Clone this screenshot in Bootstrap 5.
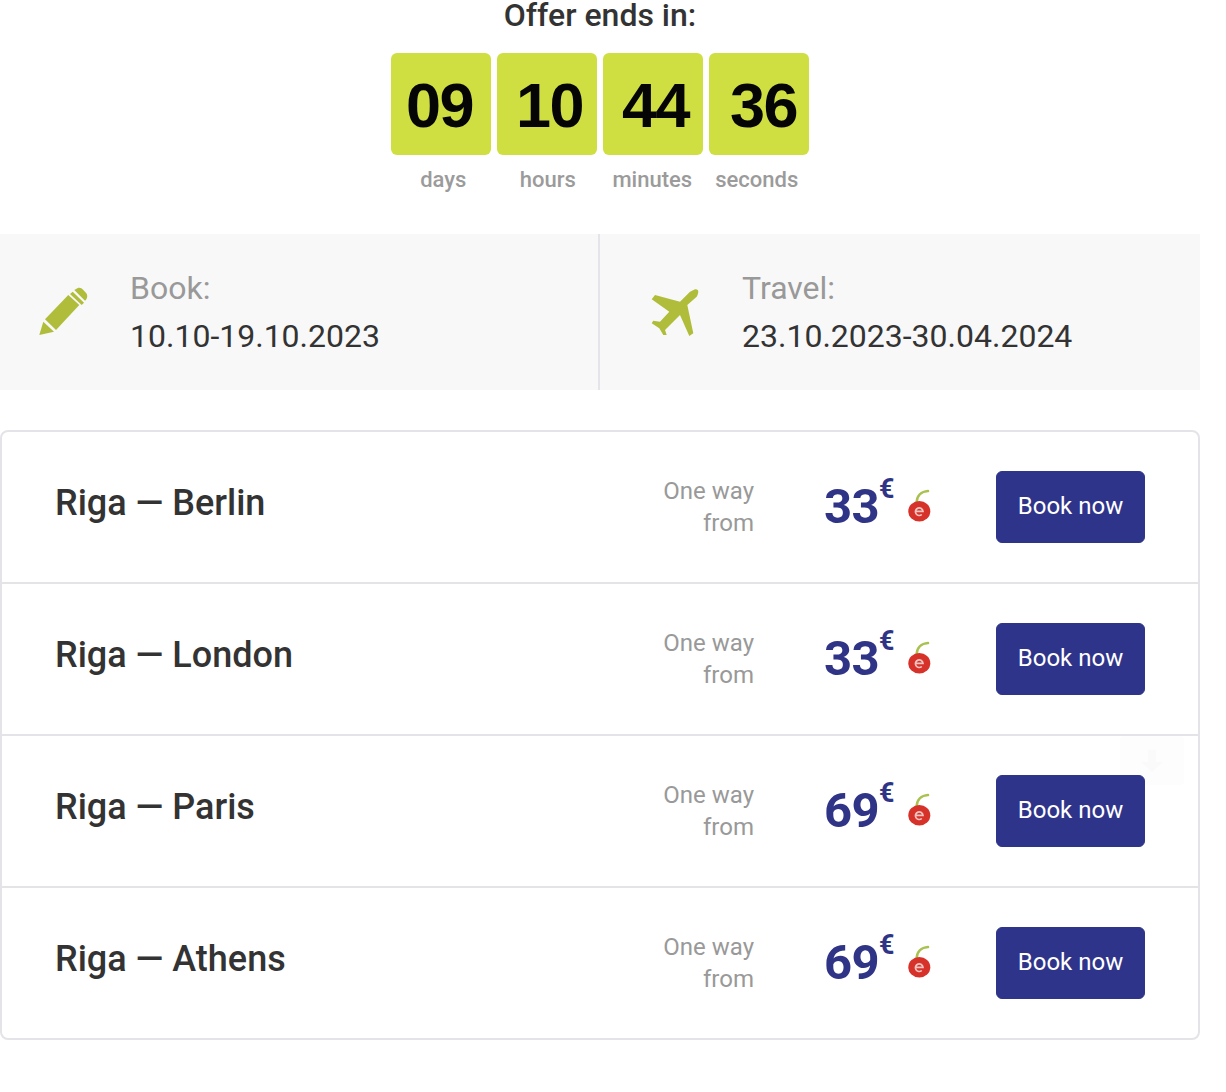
<!DOCTYPE html>
<html lang="en">
<head>
<meta charset="utf-8">
<title>Offer</title>
<link rel="stylesheet" href="https://cdn.jsdelivr.net/npm/bootstrap@5.3.0/dist/css/bootstrap.min.css">
<style>
html,body{margin:0;background:#fff}
body{font-family:Roboto,"Liberation Sans",sans-serif;color:#333;height:1092px;overflow:hidden}
.pg{width:1200px;position:relative}
.ttl{font-size:32px;font-weight:500;line-height:30px;height:53px;margin:0;color:#333}
.cnts{gap:6px}
.cnt{width:100px;height:102px;background:#cfdf42;border-radius:6px;font-family:"Liberation Sans",sans-serif;font-weight:700;font-size:63px;letter-spacing:-1.500px;color:#050505;line-height:105px;text-align:center}
.c1{padding-right:3px}
.c2{padding-left:5px}
.c3{padding-left:5px}
.c4{padding-left:9px}
.lbls{margin-top:12px;height:26px}
.lbl{width:104.500px;text-align:center;font-size:22px;font-weight:500;color:#9b9b9b;line-height:25px}
.info{margin-top:41px;height:156px;background:#f8f8f8}
.cell{height:156px}
.cell1{width:598px}
.cell2{width:602px;border-left:2px solid #e4e4ea}
.ic1{width:130px;padding-left:39px}
.ic2{width:142px;padding-left:50px}
.k{font-size:32px;line-height:48px;color:#999}
.v{font-size:32px;line-height:48px;color:#333}
.rows{margin-top:40px;border:2px solid #e4e4e8;border-radius:8px;position:relative;z-index:1}
.rw{height:152px;padding:0 53px 0 53px;border-bottom:2px solid #e4e4e8}
.rw:last-child{border-bottom:0;height:150px}
.city{font-size:36px;font-weight:500;color:#333;line-height:42px;margin-top:-8px}
.way{width:200px;text-align:right;font-size:24px;line-height:32px;color:#999;margin-left:auto}
.prc{width:242px;padding-left:70px;position:relative;height:72px}
.num{font-size:49px;font-weight:700;color:#303486;line-height:72px;letter-spacing:-.500px}
.eur{font-size:27px;font-weight:700;color:#303486;line-height:28px;position:absolute;top:4px;left:125px}
.chy{position:absolute;left:153px;top:17px}
.bk{width:149px;height:72px;background:#2f348b;border-color:#2f348b;color:#fff;font-size:24px;border-radius:6px;padding:0;line-height:68px}
.bk:hover{background:#2f348b;color:#fff}
.totop{position:absolute;left:1120px;top:736px;width:64px;height:49px;background:#fdfdfd;border-radius:4px;z-index:0}
</style>
</head>
<body>
<div class="pg">
  <h1 class="ttl text-center">Offer ends in:</h1>
  <div class="cnts d-flex justify-content-center">
    <div class="cnt c1">09</div><div class="cnt c2">10</div><div class="cnt c3">44</div><div class="cnt c4">36</div>
  </div>
  <div class="lbls d-flex justify-content-center">
    <div class="lbl">days</div><div class="lbl">hours</div><div class="lbl">minutes</div><div class="lbl">seconds</div>
  </div>
  <div class="info d-flex">
    <div class="cell cell1 d-flex align-items-center">
      <div class="ic1">
        <svg width="50" height="50" viewBox="0 0 50 50" class="d-block" fill="#afbd3a"><path d="M.3 48 4.300 34.700 15 44.700z"/><path d="M6 32.300 29.300 8 40.300 18 17 43z"/><path d="M31 7 33.700 4.700 45 15.700 42.700 18z"/><path d="M35.300 3 39.300.700c2-.3 3.500.5 5 2.300l3 3.200c1.500 2 1.300 5.500-1.300 7.500z"/></svg>
      </div>
      <div><div class="k">Book:</div><div class="v">10.10-19.10.2023</div></div>
    </div>
    <div class="cell cell2 d-flex align-items-center">
      <div class="ic2">
        <svg width="50" height="50" viewBox="0 0 50 50" class="d-block" fill="#afbd3a"><path d="M45 2.300c2-.6 3.500 1 3.300 2.400s-.6 3.500-1.600 5L37.300 18l6 28.300-4 2.700L30 28 20 38l-5 5 1.700 5h-3.400l-4-6.700-7.600-5 1.600-2.600 6.700 1 9.300-10-17.600-12.400L5 8l25 6.700 10-10z"/></svg>
      </div>
      <div><div class="k">Travel:</div><div class="v">23.10.2023-30.04.2024</div></div>
    </div>
  </div>
  <div class="rows">
    <div class="rw d-flex align-items-center"><div class="city">Riga — Berlin</div><div class="way">One way<br>from</div><div class="prc"><span class="num">33</span><span class="eur">€</span><svg class="chy" width="26" height="34" viewBox="0 0 26 34"><use href="#cherry"/></svg></div><a class="btn bk" href="#">Book now</a></div>
    <div class="rw d-flex align-items-center"><div class="city">Riga — London</div><div class="way">One way<br>from</div><div class="prc"><span class="num">33</span><span class="eur">€</span><svg class="chy" width="26" height="34" viewBox="0 0 26 34"><use href="#cherry"/></svg></div><a class="btn bk" href="#">Book now</a></div>
    <div class="rw d-flex align-items-center"><div class="city">Riga — Paris</div><div class="way">One way<br>from</div><div class="prc"><span class="num">69</span><span class="eur">€</span><svg class="chy" width="26" height="34" viewBox="0 0 26 34"><use href="#cherry"/></svg></div><a class="btn bk" href="#">Book now</a></div>
    <div class="rw d-flex align-items-center"><div class="city">Riga — Athens</div><div class="way">One way<br>from</div><div class="prc"><span class="num">69</span><span class="eur">€</span><svg class="chy" width="26" height="34" viewBox="0 0 26 34"><use href="#cherry"/></svg></div><a class="btn bk" href="#">Book now</a></div>
  </div>
  <div class="totop d-flex justify-content-center align-items-center"><svg width="24" height="26" viewBox="0 0 24 26"><path fill="#fafafa" d="M8 2h8v12h7L12 24 1 14h7z"/></svg></div>
</div>
<svg width="0" height="0" class="position-absolute"><defs>
<filter id="soft" x="-20%" y="-20%" width="140%" height="140%"><feGaussianBlur stdDeviation=".5"/></filter>
<g id="cherry" filter="url(#soft)">
<path d="M9.700 14C10 8 14 3.500 21 3" stroke="#a9c24f" stroke-width="2.600" fill="none" stroke-linecap="round"/>
<ellipse cx="12.300" cy="23.300" rx="11" ry="10.300" fill="#d7302a"/>
<path d="M9 23.300h7a3.800 3.800 0 1 0-1.200 3.200" stroke="#f4c4be" stroke-width="1.700" fill="none"/>
</g></defs></svg>
<script src="https://cdn.jsdelivr.net/npm/bootstrap@5.3.0/dist/js/bootstrap.bundle.min.js"></script>
</body>
</html>
